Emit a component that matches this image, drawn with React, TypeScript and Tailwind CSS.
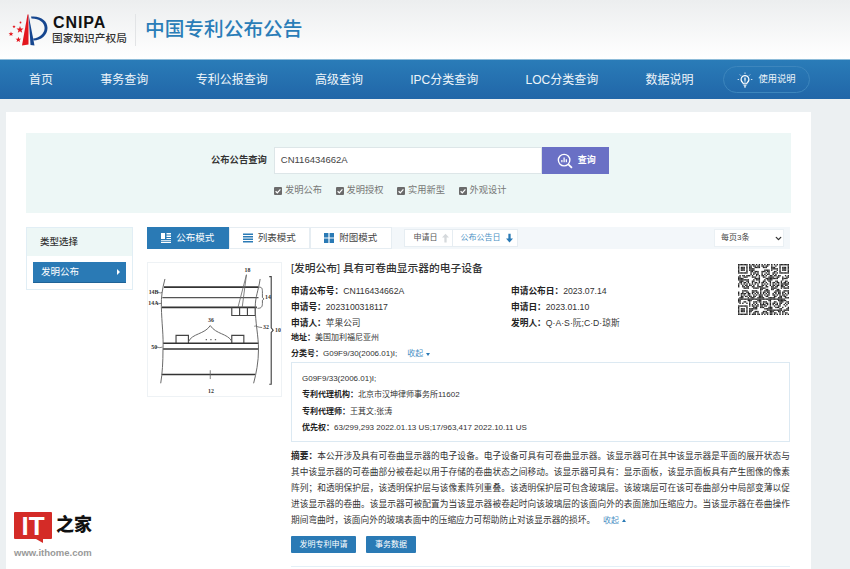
import { ChevronDown } from "lucide-react";

const sans = "font-['Liberation_Sans','Noto_Sans_CJK_SC',sans-serif]";

const navItems = ["首页", "事务查询", "专利公报查询", "高级查询", "IPC分类查询", "LOC分类查询", "数据说明"];
const checks = ["发明公布", "发明授权", "实用新型", "外观设计"];

// QR finder patterns plus a fixed pseudo random fill
function QrCode() {
  const size = 37;
  const finder = (x: number, y: number) => {
    if (x < 0 || y < 0 || x > 6 || y > 6) return false;
    return x === 0 || y === 0 || x === 6 || y === 6 || (x > 1 && x < 5 && y > 1 && y < 5);
  };
  const cells: { x: number; y: number }[] = [];
  for (let y = 0; y < size; y++) {
    for (let x = 0; x < size; x++) {
      const inFinder = (x < 8 && y < 8) || (x > size - 9 && y < 8) || (x < 8 && y > size - 9);
      let on;
      if (inFinder) on = finder(x, y) || finder(x - (size - 7), y) || finder(x, y - (size - 7));
      else on = ((x * 7 + y * 13 + x * y * 3 + ((x ^ y) * 5)) % 11) % 2 === 0;
      if (on) cells.push({ x, y });
    }
  }
  return (
    <svg viewBox="0 0 37 37" className="w-[51px] h-[53px] mt-[1px] mr-[1px] shrink-0 bg-white">
      {cells.map((c) => (
        <rect key={`${c.x}-${c.y}`} x={c.x} y={c.y} width="1" height="1" fill="#222" />
      ))}
    </svg>
  );
}

function PatentFigure() {
  return (
    <svg viewBox="6 6 408 408" className="w-full h-full" fill="none" stroke="#666" strokeWidth="3">
      <path d="M55 80H345" strokeWidth="5" stroke="#333" />
      <path d="M50 112H345" strokeWidth="4" stroke="#555" />
      <path d="M48 142H340" strokeWidth="5" stroke="#333" />
      <path d="M263 142V167H335V142M287 142V167M311 142V167" strokeWidth="3.5" stroke="#444" />
      <path d="M92 252V228H130V252M263 252V228H300V252" strokeWidth="3.5" stroke="#444" />
      <path d="M52 252H345" strokeWidth="5" stroke="#333" />
      <path d="M52 270H345" strokeWidth="5" stroke="#333" />
      <path d="M48 348H335" strokeWidth="5" stroke="#333" />
      <path d="M58 55C50 85 46 110 47 140C48 190 54 230 52 270C52 310 50 345 45 375" />
      <path d="M350 55C345 90 335 110 335 140C335 190 345 230 345 270C345 310 338 345 330 375" />
      <path d="M378 48H384V205L390 212L384 219V378H378" strokeWidth="3.5" stroke="#444" />
      <path d="M345 80C357 80 357 84 357 100V112L362 116L357 120V130C357 142 352 145 342 145" strokeWidth="3" />
      <path d="M308 42L282 142M308 42L295 142" strokeWidth="2.5" />
      <path d="M130 248C140 222 180 225 197 198C215 225 250 222 263 246" strokeWidth="3" />
      <path d="M183 241H187M197 241H201M211 241H215" strokeWidth="3.5" />
      <path d="M197 335V362M34 97C38 93 42 101 50 96M32 130C36 126 40 134 48 129M30 265C34 261 38 269 50 264M332 200C337 197 342 204 356 204" strokeWidth="2.5" />
      <g fontSize="18" fill="#333" stroke="none" fontFamily="Liberation Serif, serif" fontWeight="700">
        <text x="302" y="34">18</text>
        <text x="8" y="102">14B</text>
        <text x="7" y="135">14A</text>
        <text x="365" y="118">14</text>
        <text x="190" y="187">36</text>
        <text x="359" y="210">32</text>
        <text x="396" y="218">10</text>
        <text x="16" y="270">50</text>
        <text x="190" y="405">12</text>
      </g>
    </svg>
  );
}

function CnipaMark() {
  return (
    <svg viewBox="8 10 42 34" className="w-[42px] h-[34px] shrink-0">
      <path d="M27.5 11.5L22 42.5L28.5 41.5L28.5 11.5Z" fill="#e3161e" />
      <path d="M28.5 11.5L34.5 42.5L30.5 42Z" fill="#16468f" />
      <path d="M31 13.5C41 12.5 47.5 18 47.5 25C47.5 32 41 37.5 33.5 37.5L33.2 35.6C39 35 44.6 31 44.6 25C44.6 19.5 39 15.4 31.5 15.5Z" fill="#16468f" />
      <g fill="#e3161e">
        <path d="M20 23l.9 2.5 2.6.1-2 1.6.7 2.5-2.2-1.4-2.2 1.4.7-2.5-2-1.6 2.6-.1z" />
        <path d="M18.4 33.7l.7 2 2.1.1-1.7 1.3.6 2-1.7-1.2-1.8 1.2.6-2-1.7-1.3 2.2-.1z" />
        <path d="M11 28.5l.6 1.7 1.8.1-1.4 1.1.5 1.7-1.5-1-1.5 1 .5-1.7-1.4-1.1 1.8-.1z" />
        <path d="M14 22l.4 1.1 1.2 0-1 .8.4 1.2-1-.7-1 .7.4-1.2-1-.8 1.2 0z" />
        <circle cx="20.5" cy="19.5" r="0.9" />
      </g>
    </svg>
  );
}

function BulbIcon() {
  return (
    <svg viewBox="0 0 20 20" className="w-[16px] h-[16px]" fill="none" stroke="#fff" strokeWidth="1.4">
      <path d="M10 4.5a4.8 4.8 0 0 0-3 8.6c.6.5.8 1 .8 1.6h4.4c0-.6.2-1.1.8-1.6a4.8 4.8 0 0 0-3-8.6Z" />
      <path d="M8.2 16.6h3.6M8.9 18.6h2.2" />
      <path d="M10 6.8v4M10 12v1.2" strokeWidth="1.6" />
      <path d="M10 .6v1.8M3.6 3.2l1.3 1.3M16.4 3.2l-1.3 1.3M.8 9.4h1.8M17.4 9.4h1.8" strokeWidth="1" />
    </svg>
  );
}

function SearchIcon() {
  return (
    <svg viewBox="0 0 18 18" className="w-[16px] h-[16px]" fill="none" stroke="#fff" strokeWidth="1.5">
      <circle cx="8" cy="8" r="6.5" />
      <path d="M12.8 12.8L16.8 16.8" strokeWidth="2" />
      <path d="M5.5 10.5V8M8 10.5V5M10.5 10.5V7" strokeWidth="1.4" />
    </svg>
  );
}

function Check({ label }: { label: string }) {
  return (
    <div className="flex items-center gap-[3px] w-[61.5px]">
      <span className="w-[8px] h-[8px] bg-[#6b6b6b] rounded-[1px] flex items-center justify-center">
        <svg viewBox="0 0 8 8" className="w-[8px] h-[8px]" fill="none" stroke="#fff" strokeWidth="1.2">
          <path d="M1.6 4.2L3.3 5.8L6.4 2.4" />
        </svg>
      </span>
      <span className="text-[9.25px] text-[#777]">{label}</span>
    </div>
  );
}

function Field({ name, value, className }: { name: string; value: string; className?: string }) {
  return (
    <div className={`h-[16px] leading-[16px] whitespace-nowrap ${className ?? ""}`}>
      <b className="text-[#222]">{name}：</b>
      <span className="text-[#333]">{value}</span>
    </div>
  );
}

function Tab({ label, active, icon }: { label: string; active?: boolean; icon: React.ReactNode }) {
  return (
    <div
      className={`w-[81.5px] h-[22px] flex items-center justify-center gap-[5px] text-[9.5px] border ${
        active ? "bg-[#2a7ab5] border-[#2a7ab5] text-white" : "bg-white border-[#e6edf2] text-[#444]"
      }`}
    >
      {icon}
      {label}
    </div>
  );
}

export default function App() {
  return (
    <div className={`relative w-[850px] h-[569px] overflow-hidden bg-[#ecf0f2] ${sans}`}>
      <header className="h-[59px] bg-gradient-to-b from-[#eceeef] to-white flex items-center pl-[8px]">
        <CnipaMark />
        <div className="ml-[3px] w-[82px] flex flex-col">
          <span className="text-[16px] leading-[15px] font-bold text-[#111] tracking-[0.9px]">CNIPA</span>
          <span className="text-[10.7px] leading-[14px] font-medium text-[#333] whitespace-nowrap mt-[1px] -ml-[1px]">国家知识产权局</span>
        </div>
        <div className="w-px h-[32px] bg-[#e2e4e6]" />
        <h1 className="ml-[9px] text-[19.7px] font-medium text-[#2a7db8]">中国专利公布公告</h1>
      </header>

      <nav className="h-[40px] bg-gradient-to-b from-[#2a7cb8] to-[#2166a8] border-t border-[#8ebcd9] flex items-center pl-[29px] text-[12px] text-[#eef5fa]">
        <div className="flex gap-[47.3px]">
          {navItems.map((item) => (
            <span key={item} className="whitespace-nowrap">{item}</span>
          ))}
        </div>
        <div className="ml-[29px] w-[87px] h-[27px] rounded-full border border-[#3d86bd] flex items-center pl-[13px] gap-[6px] text-[9.25px]">
          <BulbIcon />
          使用说明
        </div>
      </nav>

      <main className="mt-[13px] ml-[6px] w-[805px] h-[457px] bg-white pt-[21px] px-[20px]">
        <section className="h-[80px] bg-[#edf7f6] flex flex-col pl-[185px] pt-[14px]">
          <div className="flex items-center">
            <span className="text-[9.3px] font-bold text-[#333] whitespace-nowrap">公布公告查询</span>
            <div className="ml-[7px] w-[268px] h-[27px] bg-white border border-[#dde6e8] flex items-center pl-[6px] text-[9.5px] text-[#444]">
              CN116434662A
            </div>
            <div className="w-[67px] h-[27px] bg-[#6a70c5] flex items-center pl-[15px] gap-[5px] text-[9px] font-bold text-white">
              <SearchIcon />
              查询
            </div>
          </div>
          <div className="flex ml-[63px] mt-[10px]">
            {checks.map((c) => (
              <Check key={c} label={c} />
            ))}
          </div>
        </section>

        <div className="flex mt-[14px]">
          <aside className="w-[107px] h-[63px] border border-[#e1eef5] shrink-0">
            <div className="h-[28px] bg-[#edf7f6] flex items-center pl-[13px] text-[9.5px] font-medium text-[#333]">类型选择</div>
            <div className="mx-[6px] mt-[6px] h-[21px] bg-[#2a7ab5] border-b border-[#1f6397] flex items-center justify-between pl-[8px] pr-[6px] text-[9.5px] text-white">
              发明公布
              <span className="w-0 h-0 border-y-[3px] border-y-transparent border-l-[3px] border-l-white" />
            </div>
          </aside>

          <div className="ml-[14px] w-[643px] flex flex-col">
            <div className="h-[22px] bg-[#f3f7fa] flex items-center">
              <Tab
                active
                label="公布模式"
                icon={
                  <svg viewBox="0 0 10 10" className="w-[10px] h-[10px]" fill="#fff">
                    <path d="M0 0h4v6H0zM5.5 0H10v1.5H5.5zM5.5 2.5H10V4H5.5zM5.5 5H10v1H5.5zM0 7.2h10v1.1H0zM0 9h10v1H0z" />
                  </svg>
                }
              />
              <Tab
                label="列表模式"
                icon={
                  <svg viewBox="0 0 10 10" className="w-[10px] h-[10px]" fill="#2a7ab5">
                    <path d="M0 .5h10v1.4H0zM0 3h10v1.4H0zM0 5.6h10V7H0zM0 8.1h10v1.4H0z" />
                  </svg>
                }
              />
              <Tab
                label="附图模式"
                icon={
                  <svg viewBox="0 0 10 10" className="w-[10px] h-[10px]" fill="#2a7ab5">
                    <path d="M0 0h4.4v4.4H0zM5.6 0H10v4.4H5.6zM0 5.6h4.4V10H0zM5.6 5.6H10V10H5.6z" />
                  </svg>
                }
              />
              <div className="ml-[12px] h-[18px] flex bg-white text-[8px] border border-[#e6edf2]">
                <div className="w-[48px] flex items-center pl-[9px] gap-[4px] text-[#555] border-r border-[#e6edf2]">
                  申请日
                  <svg viewBox="0 0 8 10" className="w-[7px] h-[10px]" fill="#d5d9dc">
                    <path d="M4 0L8 4.5H5.3V10H2.7V4.5H0Z" />
                  </svg>
                </div>
                <div className="w-[64px] flex items-center pl-[8px] gap-[5px] text-[#4a90c4]">
                  公布公告日
                  <svg viewBox="0 0 8 10" className="w-[7px] h-[10px]" fill="#2a7ab5">
                    <path d="M4 10L8 5.5H5.3V0H2.7V5.5H0Z" />
                  </svg>
                </div>
              </div>
              <div className="ml-auto mr-[6px] w-[70px] h-[18px] bg-white border border-[#eaf0f4] flex items-center justify-between pl-[6px] text-[8px] text-[#444]">
                每页3条
                <ChevronDown size={9} strokeWidth={3.5} className="text-[#333]" />
              </div>
            </div>

            <div className="flex mt-[13px]">
              <div className="w-[135px] h-[135px] border border-[#eef2f5] shrink-0">
                <PatentFigure />
              </div>

              <article className="ml-[9px] w-[499px] text-[8.7px]">
                <div className="flex justify-between">
                  <div className="w-[440px]">
                    <h2 className="h-[20px] leading-[13px] text-[10.75px] font-medium text-[#333]">[发明公布] 具有可卷曲显示器的电子设备</h2>
                    <div className="mt-[1px] grid grid-cols-[220px_1fr]">
                      <Field name="申请公布号" value="CN116434662A" />
                      <Field name="申请公布日" value="2023.07.14" />
                      <Field name="申请号" value="2023100318117" />
                      <Field name="申请日" value="2023.01.10" />
                      <Field name="申请人" value="苹果公司" />
                      <Field name="发明人" value="Q·A·S·阮;C·D·琼斯" />
                    </div>
                  </div>
                  <QrCode />
                </div>
                <Field name="地址" value="美国加利福尼亚州" className="text-[8px] -mt-[1px]" />
                <div className="h-[16px] leading-[16px] whitespace-nowrap text-[8px] flex items-center">
                  <b className="text-[#222]">分类号：</b>
                  <span className="text-[#333]">G09F9/30(2006.01)I;</span>
                  <span className="ml-[10px] text-[#4a90c4]">收起</span>
                  <span className="ml-[3px] w-0 h-0 border-x-[2.5px] border-x-transparent border-t-[3px] border-t-[#2a7ab5]" />
                </div>

                <div className="h-[80px] border border-[#dce9f2] pl-[10px] pt-[8px] text-[8px]">
                  <div className="h-[16.3px] leading-[16px] text-[#333]">G09F9/33(2006.01)I;</div>
                  <Field name="专利代理机构" value="北京市汉坤律师事务所11602" className="!h-[16.3px]" />
                  <Field name="专利代理师" value="王萁文;张涛" className="!h-[16.3px]" />
                  <Field name="优先权" value="63/299,293 2022.01.13 US;17/963,417 2022.10.11 US" className="!h-[16.3px]" />
                </div>

                <p className="mt-[6px] leading-[16px] text-[8.7px] text-[#333] text-justify">
                  <b className="text-[#222]">摘要：</b>
                  本公开涉及具有可卷曲显示器的电子设备。电子设备可具有可卷曲显示器。该显示器可在其中该显示器是平面的展开状态与其中该显示器的可卷曲部分被卷起以用于存储的卷曲状态之间移动。该显示器可具有：显示面板，该显示面板具有产生图像的像素阵列；和透明保护层，该透明保护层与该像素阵列重叠。该透明保护层可包含玻璃层。该玻璃层可在该可卷曲部分中局部变薄以促进该显示器的卷曲。该显示器可被配置为当该显示器被卷起时向该玻璃层的该面向外的表面施加压缩应力。当该显示器在卷曲操作期间弯曲时，该面向外的玻璃表面中的压缩应力可帮助防止对该显示器的损坏。
                  <span className="ml-[8px] text-[8px] text-[#4a90c4]">收起</span>
                  <span className="ml-[3px] inline-block align-middle w-0 h-0 border-x-[2.5px] border-x-transparent border-b-[3px] border-b-[#2a7ab5]" />
                </p>

                <div className="flex gap-[10px] mt-[7px]">
                  <button className="w-[65px] h-[17px] bg-[#2a7ab5] rounded-[1px] text-[8px] text-white">发明专利申请</button>
                  <button className="w-[50px] h-[17px] bg-[#2a7ab5] rounded-[1px] text-[8px] text-white">事务数据</button>
                </div>
                <div className="mt-[13px] h-px bg-[#e4f0f7]" />
              </article>
            </div>
          </div>
        </div>
      </main>

      {/* ithome watermark */}
      <div className="absolute left-[14px] top-[512px] w-[80px]">
        <div className="flex items-start">
          <div className="relative w-[38px] h-[27px] bg-[#d42b27] rounded-[1px] flex items-center justify-center text-[26px] leading-none font-bold text-white">
            IT
            <span className="absolute left-[22px] top-[27px] w-0 h-0 border-l-[7px] border-l-transparent border-t-[4px] border-t-[#d42b27]" />
          </div>
          <span className="ml-[4px] text-[18px] leading-[26px] font-black text-[#111] whitespace-nowrap">之家</span>
        </div>
        <div className="mt-[9px] text-[9.5px] leading-[9px] text-[#999] font-bold whitespace-nowrap">www.ithome.com</div>
      </div>
    </div>
  );
}
